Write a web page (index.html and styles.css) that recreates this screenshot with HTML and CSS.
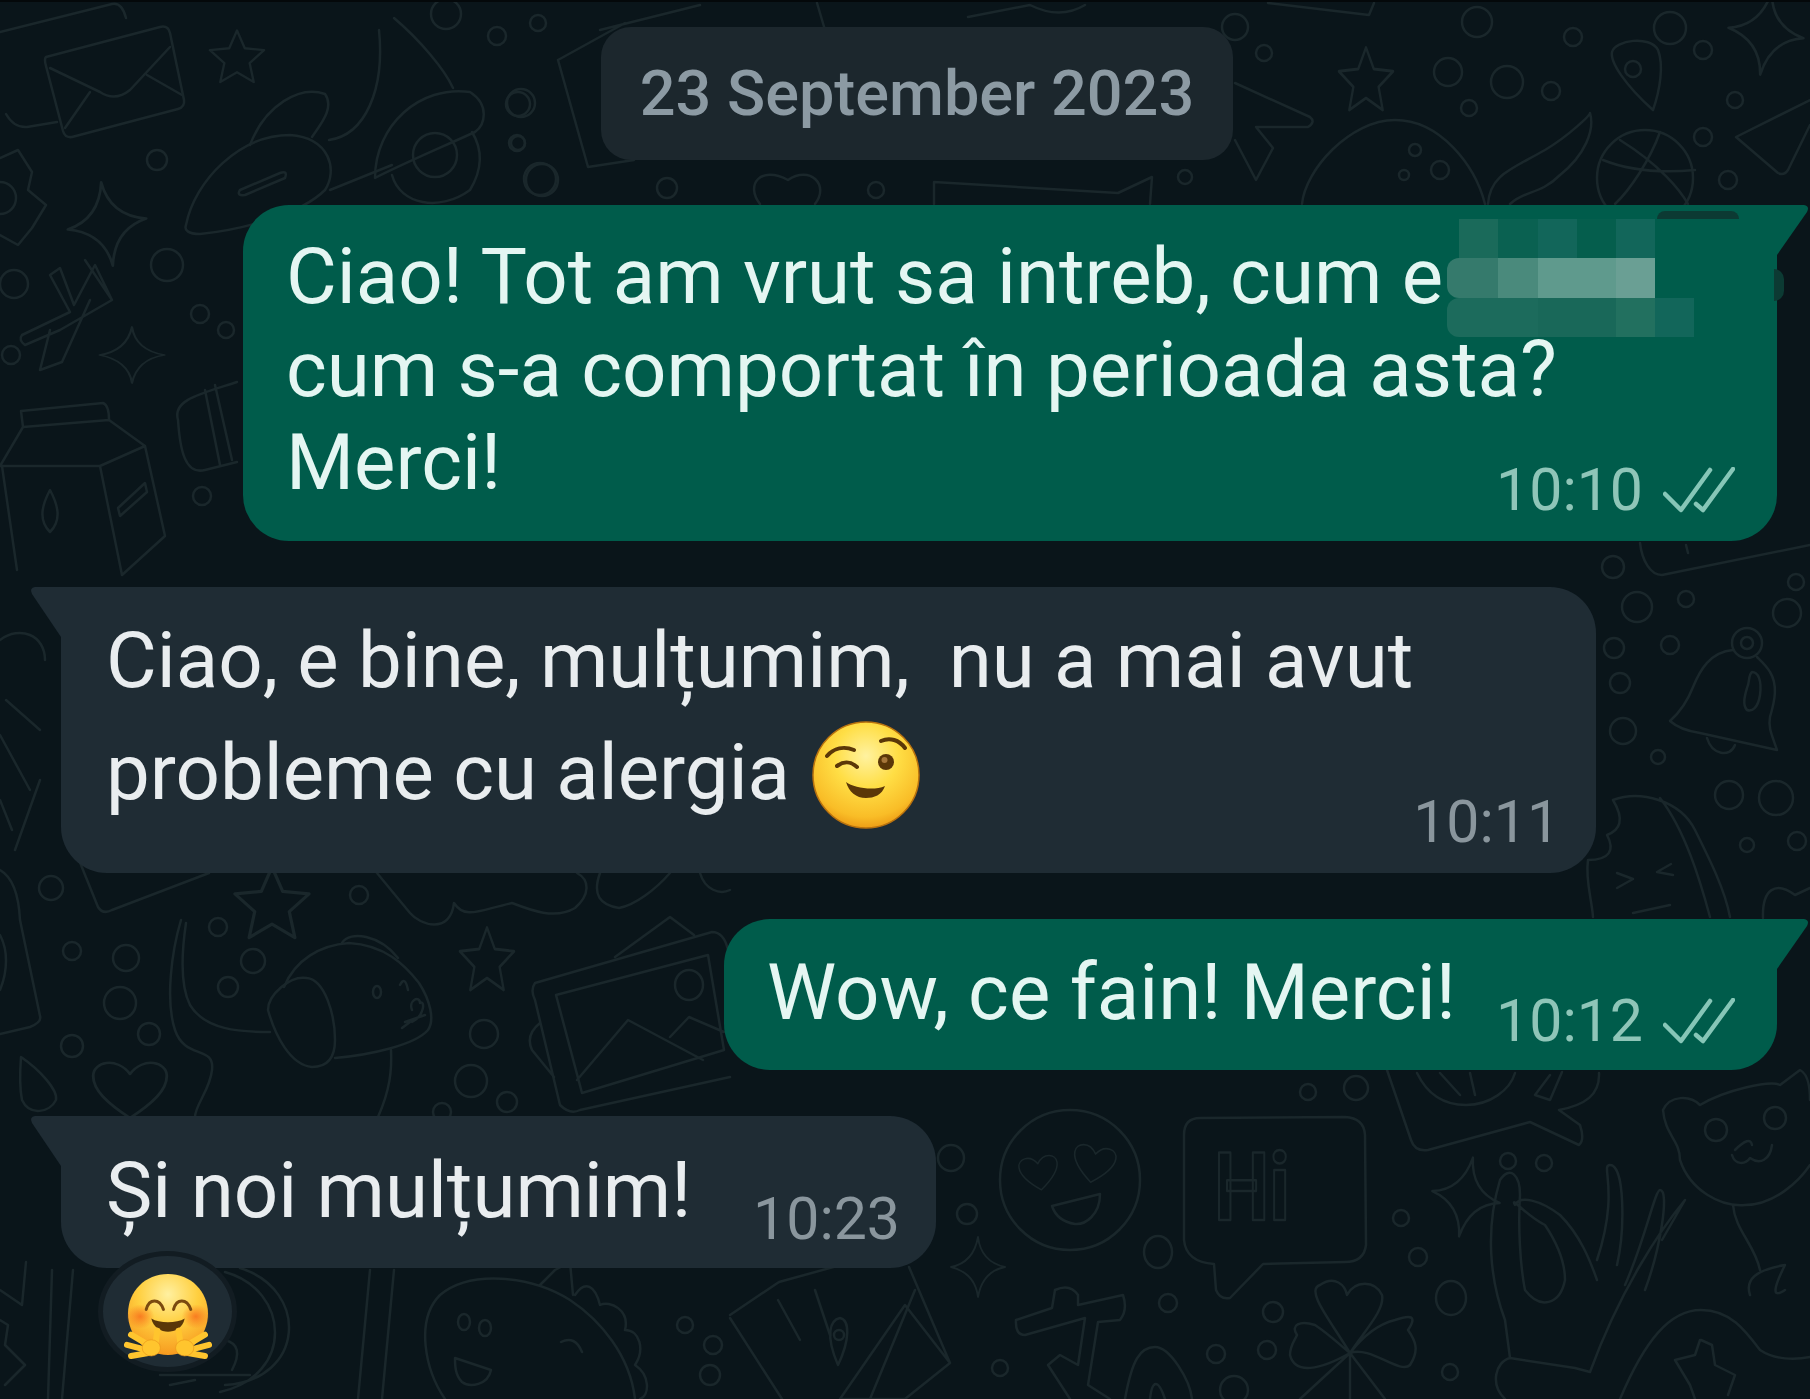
FILE: index.html
```html
<!DOCTYPE html>
<html lang="ro">
<head>
<meta charset="utf-8">
<title>Chat</title>
<link rel="stylesheet" href="styles.css">
</head>
<body>
<main class="chat">
  <svg class="wallpaper" viewBox="0 0 1810 1399" aria-hidden="true">
    <defs>
      <path id="star" d="M0-30L8.2-11.3L28.5-9.3L13.3 4.3L17.6 24.3L0 14L-17.6 24.3L-13.3 4.3L-28.5-9.3L-8.2-11.3Z"/>
      <path id="spark" d="M0-40Q4-7 36 0Q6 6 0 40Q-4 8-36 0Q-6-6 0-40Z"/>
      <path id="heart" d="M0 30C-20 15-32 2-32-12C-32-26-12-32 0-14C12-32 32-26 32-12C32 2 20 15 0 30Z"/>
    </defs>
    <!-- top left -->
    <path d="M46 57L160 27Q168 25 170 33L184 100Q185 107 178 109L72 137Q65 138 63 131L46 66Q44 59 46 57Z"/>
    <path d="M50 68L100 92Q115 102 130 90L170 47M65 128L90 92M147 75L182 95"/>
    <path d="M0 32L112 4Q122 2 126 18M6 114Q14 128 27 127L57 122"/>
    <use href="#star" transform="translate(237 59) scale(.95)"/>
    <path d="M186 225C195 180 240 135 290 135C330 138 338 170 325 190C300 215 240 230 200 234C188 234 184 230 186 225Z"/>
    <path d="M250 145C265 105 300 85 325 94C335 108 320 125 312 137M240 190L280 173Q288 170 285 178L245 195Q236 196 240 190Z"/>
    <path d="M375 178C375 125 420 85 470 92C490 105 485 125 475 132C440 148 400 165 375 178Z"/>
    <ellipse cx="435" cy="155" rx="22" ry="22"/>
    <path d="M392 175C400 205 440 212 470 190C485 165 480 145 472 132M329 140C365 135 385 90 379 30M394 18C420 40 445 70 453 88M330 190L392 165"/>
    <circle cx="446" cy="14" r="15"/><circle cx="497" cy="36" r="9"/><circle cx="538" cy="23" r="8"/>
    <circle cx="518" cy="104" r="12"/><circle cx="518" cy="143" r="7"/><circle cx="540" cy="179" r="16"/>
    <circle cx="157" cy="160" r="10"/><circle cx="167" cy="265" r="16"/><circle cx="200" cy="314" r="9"/>
    <circle cx="226" cy="330" r="8"/><circle cx="202" cy="496" r="9"/><circle cx="11" cy="355" r="9"/><circle cx="14" cy="284" r="14"/>
    <path d="M0 158L18 150L32 172L28 190L46 205L32 228L18 245L0 235"/><circle cx="0" cy="198" r="16"/>
    <use href="#spark" transform="translate(107 224) rotate(-8) scale(1.1 1.05)"/>
    <use href="#spark" transform="translate(132 355) scale(.9 .7)"/>
    <path d="M50 275L60 268L74 305L95 265L112 300L60 330L25 345Q18 340 22 335L70 312ZM112 300L85 260M50 330L40 370L62 362L90 300"/>
    <path d="M178 420C172 400 200 394 237 382M178 420C180 450 185 475 205 470L237 462M205 390L220 465M215 385L232 460"/>
    <path d="M21 411L103 403Q109 405 109 420L23 427ZM0 466L23 427M109 420L145 446L165 536L122 575M100 466L122 575M0 466L100 466L145 446M2 466L17 570"/>
    <path d="M50 490C42 505 38 520 50 532C62 520 58 505 50 490ZM118 508L145 483L147 492L120 516Z"/>
    <!-- date area -->
    <circle cx="521" cy="103" r="14"/><circle cx="517" cy="143" r="8"/><circle cx="542" cy="180" r="16"/><circle cx="667" cy="188" r="10"/><circle cx="876" cy="190" r="8"/>
    <circle cx="1235" cy="27" r="13"/><circle cx="1264" cy="53" r="8"/><circle cx="1477" cy="22" r="15"/><circle cx="1448" cy="72" r="14"/><circle cx="1507" cy="82" r="16"/>
    <circle cx="1551" cy="91" r="9"/><circle cx="1573" cy="37" r="9"/><circle cx="1469" cy="108" r="8"/><circle cx="1670" cy="28" r="16"/><circle cx="1703" cy="50" r="9"/>
    <circle cx="1735" cy="100" r="8"/><circle cx="1703" cy="137" r="9"/><circle cx="1728" cy="180" r="9"/><circle cx="1185" cy="177" r="7"/><circle cx="1415" cy="150" r="6"/><circle cx="1440" cy="170" r="9"/><circle cx="1404" cy="175" r="5"/>
    <use href="#star" transform="translate(1366 82) scale(.95 1.15)"/>
    <path d="M1653 110C1625 85 1610 62 1612 52C1615 40 1650 35 1658 50C1664 65 1660 90 1653 110Z"/><circle cx="1633" cy="69" r="8"/>
    <use href="#spark" transform="translate(1766 33) rotate(8) scale(1.05)"/>
    <circle cx="1645" cy="178" r="48"/><path d="M1620 140C1660 165 1680 190 1688 204M1660 132C1650 160 1630 190 1615 204M1603 160Q1640 175 1695 170"/>
    <path d="M1302 204C1305 170 1350 120 1395 120C1440 120 1475 165 1485 204M1488 204C1490 175 1510 170 1545 150C1570 135 1590 115 1590 113C1595 130 1585 155 1560 175C1540 195 1525 190 1510 204"/>
    <path d="M1736 137L1778 173Q1784 176 1788 170L1810 125M1736 137L1810 100"/>
    <path d="M1235 83L1310 117Q1316 122 1308 127L1256 127L1273 148L1256 180L1235 140"/>
    <path d="M558 60L625 23M558 60L588 167L634 160M600 30L700 5M817 3L825 30M968 17L1030 5Q1060 20 1085 5M1268 3L1369 15L1374 3"/>
    <path d="M760 204C745 185 760 165 788 180C810 165 830 185 815 204"/>
    <path d="M934 204L934 182L1118 193L1152 177L1150 204"/>
    <!-- left middle -->
    <circle cx="51" cy="888" r="12"/><circle cx="72" cy="951" r="9"/><circle cx="126" cy="958" r="13"/><circle cx="120" cy="1003" r="16"/>
    <circle cx="149" cy="1034" r="11"/><circle cx="72" cy="1046" r="11"/><circle cx="218" cy="927" r="9"/><circle cx="253" cy="961" r="12"/><circle cx="228" cy="987" r="10"/>
    <circle cx="359" cy="895" r="9"/><circle cx="484" cy="1034" r="14"/><circle cx="471" cy="1081" r="16"/><circle cx="507" cy="1102" r="10"/><circle cx="442" cy="1112" r="9"/>
    <use href="#star" transform="translate(487 962) scale(.95 1.15)"/>
    <use href="#star" transform="translate(272 906) scale(1.3)"/>
    <path d="M0 870Q18 880 20 920L40 1016Q42 1022 30 1027L0 1034M0 935C8 950 8 970 0 990"/>
    <path d="M181 920C172 950 165 1000 175 1030C185 1060 215 1045 212 1070C210 1090 195 1105 195 1117M186 923C182 950 180 985 190 1005C205 1030 240 1032 270 1032"/>
    <path d="M284 987C295 960 320 945 349 943C385 945 405 965 419 983C430 1000 435 1020 428 1030C415 1045 370 1055 335 1058"/>
    <path d="M268 1010C268 995 290 975 307 978C325 980 335 1015 335 1040C335 1060 325 1067 312 1067C290 1065 275 1035 268 1010Z"/>
    <path d="M342 943C350 930 380 935 398 958M400 985Q405 975 408 990M412 1010C408 1000 420 995 420 1003C425 1000 425 1015 412 1022M405 1022L425 1015M410 1022L402 1028"/>
    <ellipse cx="377" cy="992" rx="4" ry="6"/>
    <path d="M391 1050C392 1070 390 1090 378 1117"/>
    <use href="#heart" transform="translate(130 1088) scale(1.15 1)"/>
    <path d="M21 1057C40 1070 58 1090 56 1100C50 1112 30 1117 22 1100C20 1090 20 1070 21 1057Z"/>
    <path d="M535 983L712 932Q724 932 728 950M535 983Q530 990 535 1000L560 1105Q570 1115 580 1110L730 1077M556 995L708 955L724 1050L582 1093ZM577 1080L628 1020L703 1060M670 1037L689 1017L724 1032M615 957L670 917L694 935M540 1023Q525 1035 532 1050L554 1077"/>
    <ellipse cx="689" cy="985" rx="14" ry="15"/>
    <path d="M377 873L410 913C420 925 450 935 454 903C465 920 480 910 512 903C530 910 555 920 575 908C590 895 590 880 577 873M600 873C592 895 600 905 619 908C635 905 655 890 670 873M700 873C705 890 720 895 730 890M79 860L98 907Q103 915 112 910L209 873"/>
    <!-- lower right -->
    <ellipse cx="1070" cy="1180" rx="70" ry="70"/>
    <use href="#heart" transform="translate(1039 1172) rotate(-8) scale(.6)"/>
    <use href="#heart" transform="translate(1094 1163) rotate(10) scale(.65)"/>
    <path d="M1052 1206L1100 1194C1100 1215 1085 1225 1075 1224C1062 1222 1055 1215 1052 1206Z"/>
    <path d="M1184 1135Q1184 1118 1200 1118L1345 1117Q1364 1118 1365 1135L1366 1245Q1364 1262 1345 1262L1263 1264L1230 1298Q1220 1300 1216 1290L1214 1264Q1186 1262 1184 1240Z"/>
    <text class="hi" x="1214" y="1220" textLength="76" lengthAdjust="spacingAndGlyphs">Hi</text>
    <path d="M1387 1070L1411 1140Q1415 1152 1428 1150L1530 1122L1579 1145Q1585 1140 1580 1125L1559 1110C1585 1105 1600 1095 1599 1073M1417 1073C1430 1100 1450 1105 1466 1105C1490 1105 1510 1090 1515 1073M1440 1073L1460 1095M1470 1073L1475 1095M1550 1075L1535 1095L1550 1100L1562 1072"/>
    <circle cx="951" cy="1158" r="13"/><circle cx="967" cy="1214" r="10"/><circle cx="1308" cy="1092" r="8"/><circle cx="1356" cy="1088" r="12"/>
    <ellipse cx="1158" cy="1252" rx="14" ry="16"/><circle cx="1168" cy="1303" r="9"/><circle cx="1273" cy="1312" r="10"/><circle cx="1216" cy="1354" r="9"/><circle cx="1267" cy="1350" r="9"/>
    <circle cx="1000" cy="1368" r="8"/><circle cx="1234" cy="1390" r="14"/><circle cx="1401" cy="1218" r="8"/><circle cx="1418" cy="1257" r="9"/><ellipse cx="1451" cy="1298" rx="15" ry="17"/>
    <circle cx="1450" cy="1372" r="8"/><circle cx="1508" cy="1161" r="8"/><circle cx="1544" cy="1163" r="8"/>
    <use href="#spark" transform="translate(1466 1197) rotate(10) scale(.95 1)"/>
    <use href="#spark" transform="translate(978 1267) scale(.75)"/>
    <path d="M1016 1320L1052 1308L1055 1290Q1070 1283 1078 1295L1078 1305L1123 1295Q1128 1310 1120 1320L1098 1322L1088 1385L1110 1399M1016 1320Q1015 1335 1025 1335L1085 1318L1078 1365L1060 1355L1048 1365L1070 1399"/>
    <path d="M1125 1399C1132 1360 1140 1347 1155 1347C1170 1347 1190 1380 1192 1399M1150 1399C1152 1380 1158 1378 1165 1399"/>
    <path d="M1350 1353C1330 1320 1305 1290 1320 1285C1335 1275 1345 1285 1347 1295C1355 1280 1375 1280 1382 1295C1385 1310 1365 1330 1350 1353C1320 1370 1295 1375 1290 1355C1290 1345 1295 1340 1297 1335C1290 1325 1300 1320 1315 1325C1330 1335 1340 1345 1350 1353C1370 1345 1400 1375 1410 1365C1420 1350 1415 1340 1408 1330C1418 1315 1410 1315 1395 1320C1375 1325 1360 1340 1350 1353L1350 1399M1350 1353L1300 1399M1350 1353L1385 1399"/>
    <path d="M1505 1399C1490 1385 1495 1362 1510 1358L1575 1368L1590 1372C1620 1290 1660 1230 1685 1200L1662 1240M1510 1358L1505 1320C1490 1280 1485 1230 1500 1180C1510 1165 1520 1175 1520 1195C1518 1225 1520 1265 1525 1290C1540 1310 1560 1305 1565 1280C1565 1260 1555 1240 1545 1225C1525 1215 1510 1195 1515 1205C1520 1195 1540 1200 1560 1215C1580 1235 1590 1260 1597 1280M1597 1260C1620 1190 1600 1165 1610 1165C1625 1165 1625 1230 1617 1265M1625 1285C1645 1240 1655 1190 1660 1190C1670 1190 1660 1250 1645 1290"/>
    <path d="M1663 1110C1670 1095 1690 1095 1700 1105C1725 1090 1770 1080 1780 1085L1800 1070Q1810 1075 1810 1100M1663 1110C1665 1135 1680 1140 1680 1160C1690 1190 1720 1207 1745 1205C1775 1205 1800 1180 1810 1165M1733 1205C1735 1230 1755 1245 1760 1270M1750 1295C1745 1280 1755 1270 1785 1265C1775 1285 1770 1300 1785 1290"/>
    <circle cx="1716" cy="1130" r="11"/><circle cx="1775" cy="1118" r="11"/>
    <path d="M1735 1150Q1750 1135 1752 1145M1732 1155C1735 1165 1745 1165 1750 1158C1760 1165 1770 1160 1772 1145"/>
    <path d="M1620 1399C1645 1340 1670 1310 1701 1310C1730 1310 1745 1330 1760 1350C1775 1360 1795 1360 1810 1357M1701 1340L1712 1345L1715 1365L1735 1375L1728 1395M1700 1340L1695 1355L1675 1360L1690 1385L1695 1399"/>
    <!-- right middle -->
    <circle cx="1613" cy="567" r="11"/><circle cx="1637" cy="607" r="15"/><circle cx="1686" cy="599" r="8"/><circle cx="1614" cy="648" r="10"/><circle cx="1670" cy="645" r="9"/>
    <circle cx="1620" cy="683" r="10"/><circle cx="1623" cy="731" r="13"/><circle cx="1658" cy="757" r="7"/><circle cx="1729" cy="795" r="14"/><circle cx="1776" cy="798" r="17"/>
    <circle cx="1747" cy="845" r="7"/><circle cx="1797" cy="841" r="9"/><circle cx="1796" cy="582" r="8"/><circle cx="1787" cy="613" r="14"/>
    <circle cx="1747" cy="643" r="15"/><circle cx="1747" cy="643" r="6"/>
    <path d="M1733 650C1710 652 1700 670 1693 687C1688 700 1680 712 1670 721Q1680 730 1700 733L1777 750C1772 735 1768 728 1770 717C1775 700 1778 685 1770 672C1766 665 1760 660 1757 657"/>
    <path d="M1707 738C1712 755 1730 758 1735 745M1752 672C1758 672 1762 680 1760 695C1758 708 1752 712 1747 710C1742 705 1745 695 1747 688C1750 682 1748 675 1752 672Z"/>
    <path d="M1613 800C1640 790 1680 800 1695 830C1710 860 1725 890 1730 917M1613 800C1625 820 1620 830 1607 835C1615 850 1610 860 1588 860C1585 880 1592 900 1593 917M1660 798C1685 830 1700 880 1710 917"/>
    <path d="M1617 873L1633 879L1617 888M1673 875L1657 872L1671 864M1633 913L1670 905"/>
    <path d="M1640 543C1642 560 1650 575 1662 575L1810 545M1686 545L1688 553"/>
    <path d="M1763 918C1762 890 1775 880 1795 895L1810 888"/>
    <!-- bottom left -->
    <path d="M52 1270L48 1399M73 1270L62 1399M0 1290L22 1305L26 1262M0 1320L8 1325L5 1345L25 1365L5 1385"/>
    <path d="M225 1272C290 1290 295 1375 220 1392M240 1268C310 1290 305 1380 225 1385M160 1375L250 1375M170 1385L195 1380"/>
    <path d="M225 1340Q245 1345 232 1370"/>
    <path d="M370 1270L358 1399M394 1270L382 1399"/>
    <path d="M445 1399C425 1370 415 1320 440 1295C470 1270 530 1275 570 1300C600 1320 630 1355 635 1399M540 1285L555 1270L570 1262L573 1295M575 1295C585 1280 595 1285 600 1305C610 1300 630 1310 625 1330C640 1330 645 1350 635 1365C650 1375 650 1395 640 1399"/>
    <ellipse cx="464" cy="1322" rx="6" ry="8"/><ellipse cx="485" cy="1328" rx="6" ry="8"/>
    <path d="M455 1358L491 1370C488 1385 470 1388 462 1382C455 1375 455 1365 455 1358ZM561 1342Q575 1335 582 1352"/>
    <circle cx="685" cy="1325" r="8"/><circle cx="713" cy="1345" r="9"/><circle cx="710" cy="1375" r="10"/>
    <path d="M730 1315L779 1282L848 1263M730 1318L782 1399M909 1267L950 1363L905 1399L840 1399L905 1305L950 1363M915 1290L870 1399M778 1300L800 1340M815 1290L830 1335"/>
    <path d="M838 1365C825 1335 830 1320 840 1318C850 1320 850 1340 838 1365Z"/><circle cx="839" cy="1335" r="5"/>
    <path d="M40 780L15 850M0 800L12 830M0 640C20 625 45 635 45 660M0 735L30 790M6 700L40 730"/>
  </svg>

  <div class="date">
    <span class="date-text">23 September 2023</span>
  </div>

  <article class="msg out m1">
    <p class="text">Ciao! Tot am vrut sa intreb, cum e<br>cum s-a comportat în perioada asta?<br>Merci!</p>
    <div class="meta">
      <span class="time">10:10</span>
      <svg class="check" viewBox="0 0 72 46" aria-hidden="true"><path d="M2 27L18 43L47 3M33 37L40 43L70 2"/></svg>
    </div>
    <div class="redact">
      <i></i><i class="a1"></i><i class="b"></i><i class="c"></i><i class="a"></i><i class="c"></i><i></i>
      <i class="e r"></i><i class="e1"></i><i class="e2"></i><i class="e3"></i><i class="e3"></i><i class="e4"></i><i></i>
      <i class="f r"></i><i class="f1"></i><i class="f1"></i><i class="f2"></i><i class="f2"></i><i class="f3"></i><i class="c"></i>
    </div>
    <span class="smudge s1"></span>
    <span class="smudge s2"></span>
  </article>

  <article class="msg in m2">
    <p class="text tall">Ciao, e bine, mulțumim,&nbsp; nu a mai avut<br>probleme cu alergia <svg class="wink" viewBox="0 0 108 108" aria-label="😉">
      <defs>
        <radialGradient id="winkFace" cx="50%" cy="32%" r="72%">
          <stop offset="0" stop-color="#fff2a0"/><stop offset=".42" stop-color="#ffde45"/><stop offset=".8" stop-color="#f9bd27"/><stop offset="1" stop-color="#e9920f"/>
        </radialGradient>
      </defs>
      <circle cx="54" cy="54" r="53" fill="url(#winkFace)" stroke="#b9720e" stroke-width="1.5"/>
      <path class="ink" d="M15 35C22 27 32 25 42 29M25 45C32 40 38 40 45 46M69 20C78 16 87 19 93 27"/>
      <circle cx="74" cy="41" r="8" fill="#5b3708"/>
      <circle cx="72.500" cy="39" r="3" fill="#a6763a"/>
      <path class="mouth" d="M34 61C42 67 62 70 73 65C70 74 62 77 54 77C44 77 37 71 34 61Z"/>
    </svg></p>
    <span class="time">10:11</span>
  </article>

  <article class="msg out m3">
    <p class="text">Wow, ce fain! Merci!</p>
    <div class="meta">
      <span class="time">10:12</span>
      <svg class="check" viewBox="0 0 72 46" aria-hidden="true"><path d="M2 27L18 43L47 3M33 37L40 43L70 2"/></svg>
    </div>
  </article>

  <article class="msg in m4">
    <p class="text">Și noi mulțumim!</p>
    <span class="time">10:23</span>
    <div class="reaction">
      <svg class="hug" viewBox="0 0 83 83" aria-label="🤗">
        <defs>
          <radialGradient id="hugFace" cx="50%" cy="25%" r="75%">
            <stop offset="0" stop-color="#fff0a0"/><stop offset=".5" stop-color="#ffcf3f"/><stop offset="1" stop-color="#f79a1f"/>
          </radialGradient>
          <radialGradient id="cheek">
            <stop offset="0" stop-color="#f8701c" stop-opacity=".85"/><stop offset="1" stop-color="#f8701c" stop-opacity="0"/>
          </radialGradient>
        </defs>
        <path d="M41.500 0C64 0 81 17 81 39C81 60 65 80 41.500 80C18 80 2 60 2 39C2 17 19 0 41.500 0Z" fill="url(#hugFace)"/>
        <ellipse cx="14" cy="42" rx="14" ry="12" fill="url(#cheek)"/>
        <ellipse cx="69" cy="42" rx="14" ry="12" fill="url(#cheek)"/>
        <path class="ink thin" d="M20 35C23 24 33 24 37 35M47 35C50 24 60 24 64 35"/>
        <path class="mouth" d="M25 44C33 49 50 49 58 44C56 54 48 57 41.500 57C35 57 27 53 25 44Z"/>
        <g class="hand">
          <path d="M31 56L29 70M5 60L22 70M1 70L20 75M5 81L22 78"/>
          <path d="M52 56L54 70M78 60L61 70M82 70L63 75M78 81L61 78"/>
          <ellipse cx="25" cy="73" rx="9" ry="8"/>
          <ellipse cx="58" cy="73" rx="9" ry="8"/>
        </g>
      </svg>
    </div>
  </article>
</main>
</body>
</html>
```

FILE: styles.css
```css
* {
  box-sizing: border-box;
}

html,
body {
  margin: 0;
  background: #0a151a;
}

.chat {
  position: relative;
  width: 1810px;
  height: 1399px;
  overflow: hidden;
  display: flex;
  flex-direction: column;
  padding-top: 27px;
  background: #0a151a;
  border-top: 2px solid #04080a;
  font-family: Roboto, "Liberation Sans", sans-serif;
}

.wallpaper {
  position: absolute;
  left: 0;
  top: -2px;
  width: 1810px;
  height: 1399px;
  fill: none;
  stroke: #1a272b;
  stroke-width: 2.5;
  stroke-linecap: round;
  stroke-linejoin: round;
}

.hi {
  font-family: Roboto, sans-serif;
  font-weight: 700;
  font-size: 95px;
  fill: none;
  stroke: #1a272b;
  stroke-width: 2.5;
}

.date {
  position: relative;
  align-self: flex-start;
  margin-left: 601px;
  width: 632px;
  height: 133px;
  margin-top: -2px;
  display: flex;
  align-items: center;
  justify-content: center;
  background: #1c272d;
  border-radius: 30px;
}

.date-text {
  font-size: 63px;
  font-weight: 500;
  color: #8c9aa3;
}

.msg {
  position: relative;
  display: flex;
  align-items: flex-end;
  justify-content: space-between;
  margin-top: 46px;
  border-radius: 46px;
}

.text {
  margin: 0;
  font-size: 78px;
  line-height: 93px;
  white-space: nowrap;
}

.tall {
  line-height: 112px;
}

.time {
  font-size: 59px;
  line-height: 62px;
}

.meta {
  display: flex;
  flex: none;
  align-items: center;
  gap: 20px;
}

.check {
  width: 72px;
  height: 46px;
  fill: none;
  stroke: #86c6b7;
  stroke-width: 4.5;
  stroke-linecap: round;
  stroke-linejoin: round;
}

.out {
  align-self: flex-end;
  margin-right: 33px;
  background: #005c4b;
  border-top-right-radius: 0;
  color: #e4f6f2;
}

.out .time {
  color: #8fc5b8;
}

.out::after {
  content: "";
  position: absolute;
  left: 100%;
  top: 0;
  width: 33px;
  height: 50px;
  background: #005c4b;
  clip-path: path("M0 0L27 0Q33 1 30 7L0 50Z");
}

.in {
  align-self: flex-start;
  margin-left: 61px;
  background: #1f2c34;
  border-top-left-radius: 0;
  color: #e9edef;
}

.in .time {
  color: #8a969d;
}

.in::before {
  content: "";
  position: absolute;
  right: 100%;
  top: 0;
  width: 31px;
  height: 50px;
  background: #1f2c34;
  clip-path: path("M31 0L5 0Q-1 1 2 7L31 50Z");
}

.m1 {
  width: 1534px;
  height: 336px;
  margin-top: 45px;
  padding: 20px 42px 20px 43px;
}

.m1 .text {
  flex: 1 1 0;
  min-width: 0;
  margin-bottom: 12px;
}

.m2 {
  width: 1535px;
  height: 286px;
  padding: 12px 36px 20px 45px;
}

.m2 .text {
  margin-bottom: 24px;
}

.m3 {
  width: 1053px;
  height: 151px;
  padding: 20px 42px 18px 43px;
}

.m3 .text {
  margin-bottom: 13px;
}

.m4 {
  width: 875px;
  height: 152px;
  padding: 20px 36px 18px 45px;
}

.m4 .text {
  margin-bottom: 13px;
}

.wink {
  width: 108px;
  height: 108px;
  vertical-align: -30px;
  margin-left: 3px;
}

.ink {
  fill: none;
  stroke: #5b3708;
  stroke-width: 4;
  stroke-linecap: round;
}

.thin {
  stroke: #7a4a10;
  stroke-width: 3;
}

.mouth {
  fill: #5b3708;
}

.reaction {
  position: absolute;
  left: 37px;
  top: 135px;
  width: 139px;
  height: 121px;
  display: flex;
  align-items: center;
  justify-content: center;
  background: #1f2c34;
  border: 5px solid #121c22;
  border-radius: 50%;
}

.hug {
  width: 84px;
  height: 84px;
  margin-top: 8px;
  overflow: visible;
}

.hand path {
  fill: none;
  stroke: #ffc52e;
  stroke-width: 6;
  stroke-linecap: round;
}

.hand ellipse {
  fill: #ffc52e;
  stroke: #e8941a;
  stroke-width: .6;
}

.redact {
  position: absolute;
  left: 1204px;
  top: 14px;
  display: grid;
  grid-template-columns: 12px repeat(5, 39.3px) 39px;
  grid-auto-rows: 39.3px;
}

.redact .a1 {
  background: #1a6a5a;
}

.redact .b {
  background: #0a6151;
}

.redact .a {
  background: #055e4d;
}

.redact .c {
  background: #12665a;
}

.redact .e,
.redact .e1 {
  background: #357a6c;
}

.redact .e2 {
  background: #4a8a7c;
}

.redact .e3 {
  background: #5f9a8d;
}

.redact .e4 {
  background: #6a9f94;
}

.redact .f,
.redact .f1 {
  background: #1c6b5c;
}

.redact .f2 {
  background: #196859;
}

.redact .f3 {
  background: #22705f;
}

.redact .r {
  border-radius: 12px 0 0 12px;
}

.smudge {
  position: absolute;
  background: #0c3a33;
}

.s1 {
  left: 1414px;
  top: 6px;
  width: 82px;
  height: 8px;
  border-radius: 20px 20px 0 0;
}

.s2 {
  left: 1531px;
  top: 64px;
  width: 10px;
  height: 32px;
  border-radius: 0 14px 14px 0;
}
```
